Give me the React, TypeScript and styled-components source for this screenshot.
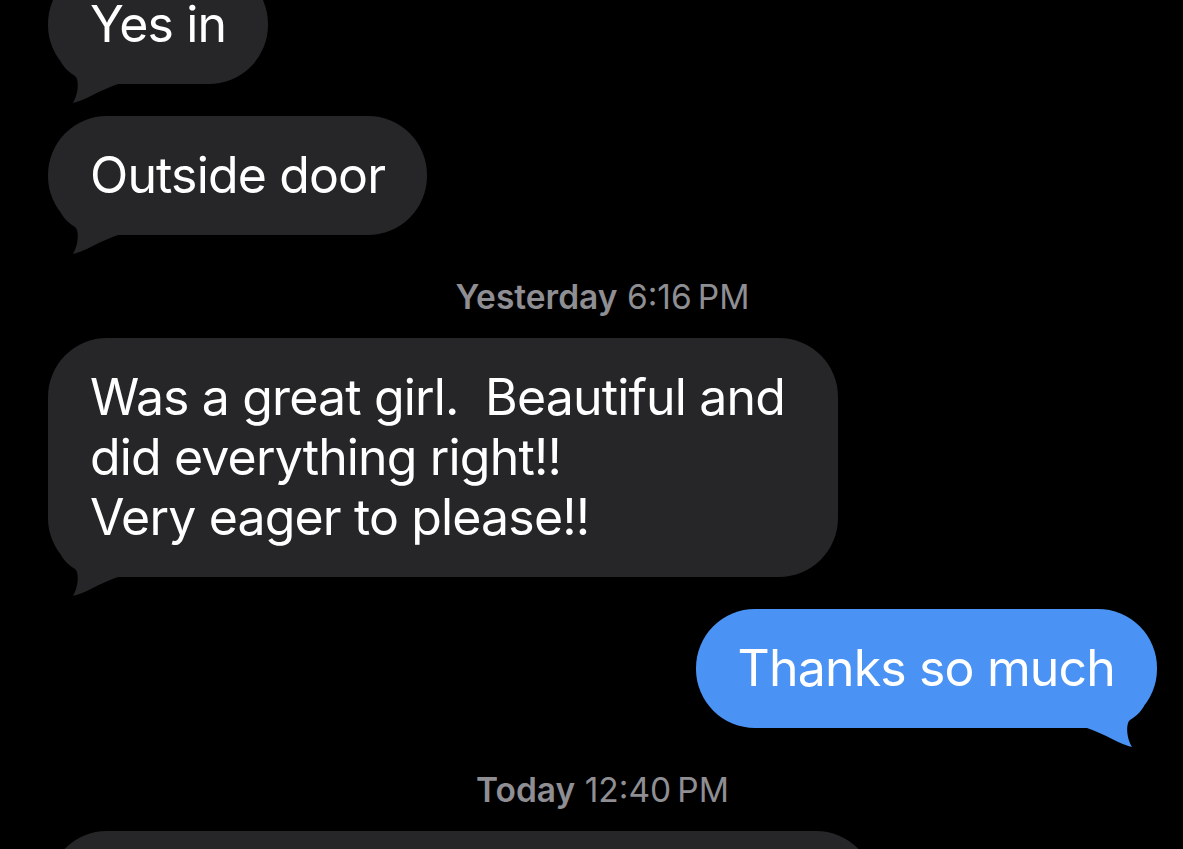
import React from "react";
import styled, { createGlobalStyle } from "styled-components";

const GlobalStyle = createGlobalStyle`
  html, body {
    margin: 0;
    padding: 0;
    background: #000;
    overflow: hidden;
  }
  body {
    font-family: Inter, "Liberation Sans", sans-serif;
    -webkit-font-smoothing: antialiased;
  }
`;

const Screen = styled.main`
  width: 1183px;
  height: 849px;
  overflow: hidden;
  background: #000;
`;

const Thread = styled.div`
  display: flex;
  flex-direction: column;
  gap: 32px;
  margin-top: -35px;
  padding: 0 26px 0 48px;
`;

const Row = styled.div<{ $out?: boolean }>`
  display: flex;
  justify-content: ${({ $out }) => ($out ? "flex-end" : "flex-start")};
`;

const Bubble = styled.div<{ $out?: boolean; $width?: string }>`
  position: relative;
  box-sizing: border-box;
  width: ${({ $width }) => $width || "fit-content"};
  max-width: ${({ $width }) => ($width ? "none" : "790px")};
  padding: 29px 42px 30px;
  border-radius: 59px;
  background: ${({ $out }) => ($out ? "#4a93f4" : "#262629")};
  color: #fff;
  font-size: 50px;
  line-height: 60px;
  letter-spacing: -0.85px;
  white-space: pre-wrap;
`;

const Text = styled.span`
  position: relative;
  z-index: 1;
`;

const TailSvg = styled.svg<{ $out?: boolean }>`
  position: absolute;
  bottom: -19px;
  width: 70px;
  height: 61px;
  ${({ $out }) => ($out ? "right: 0; transform: scaleX(-1);" : "left: 0;")}
`;

const Stamp = styled.div`
  margin: 11px 0 -10px;
  text-align: center;
  color: #8e8e93;
  font-size: 33.5px;
  line-height: 38px;

  b {
    font-weight: 600;
  }
`;

function Tail({ out }: { out?: boolean }) {
  return (
    <TailSvg $out={out} viewBox="0 0 70 61">
      <path
        d="M60 20 L13 20 C17 27 22 31 27 34 C31 37 31 51 25 61 C36 59 52 48 70 42 L70 20 Z"
        fill={out ? "#4a93f4" : "#262629"}
      />
    </TailSvg>
  );
}

type Item =
  | { kind: "msg"; text: string; out?: boolean; tail?: boolean; width?: string }
  | { kind: "stamp"; day: string; time: string };

const items: Item[] = [
  { kind: "msg", text: "Yes in", tail: true },
  { kind: "msg", text: "Outside door", tail: true },
  { kind: "stamp", day: "Yesterday", time: "6:16\u202FPM" },
  {
    kind: "msg",
    text: "Was a great girl.  Beautiful and did everything right!!\nVery eager to please!!",
    tail: true,
  },
  { kind: "msg", text: "Thanks so much", out: true, tail: true },
  { kind: "stamp", day: "Today", time: "12:40\u202FPM" },
  { kind: "msg", text: "\u00a0", width: "827px" },
];

export default function App() {
  return (
    <Screen>
      <GlobalStyle />
      <Thread>
        {items.map((item, i) =>
          item.kind === "stamp" ? (
            <Stamp key={i}>
              <b>{item.day}</b> {item.time}
            </Stamp>
          ) : (
            <Row key={i} $out={item.out}>
              <Bubble $out={item.out} $width={item.width}>
                {item.tail && <Tail out={item.out} />}
                <Text>{item.text}</Text>
              </Bubble>
            </Row>
          )
        )}
      </Thread>
    </Screen>
  );
}
